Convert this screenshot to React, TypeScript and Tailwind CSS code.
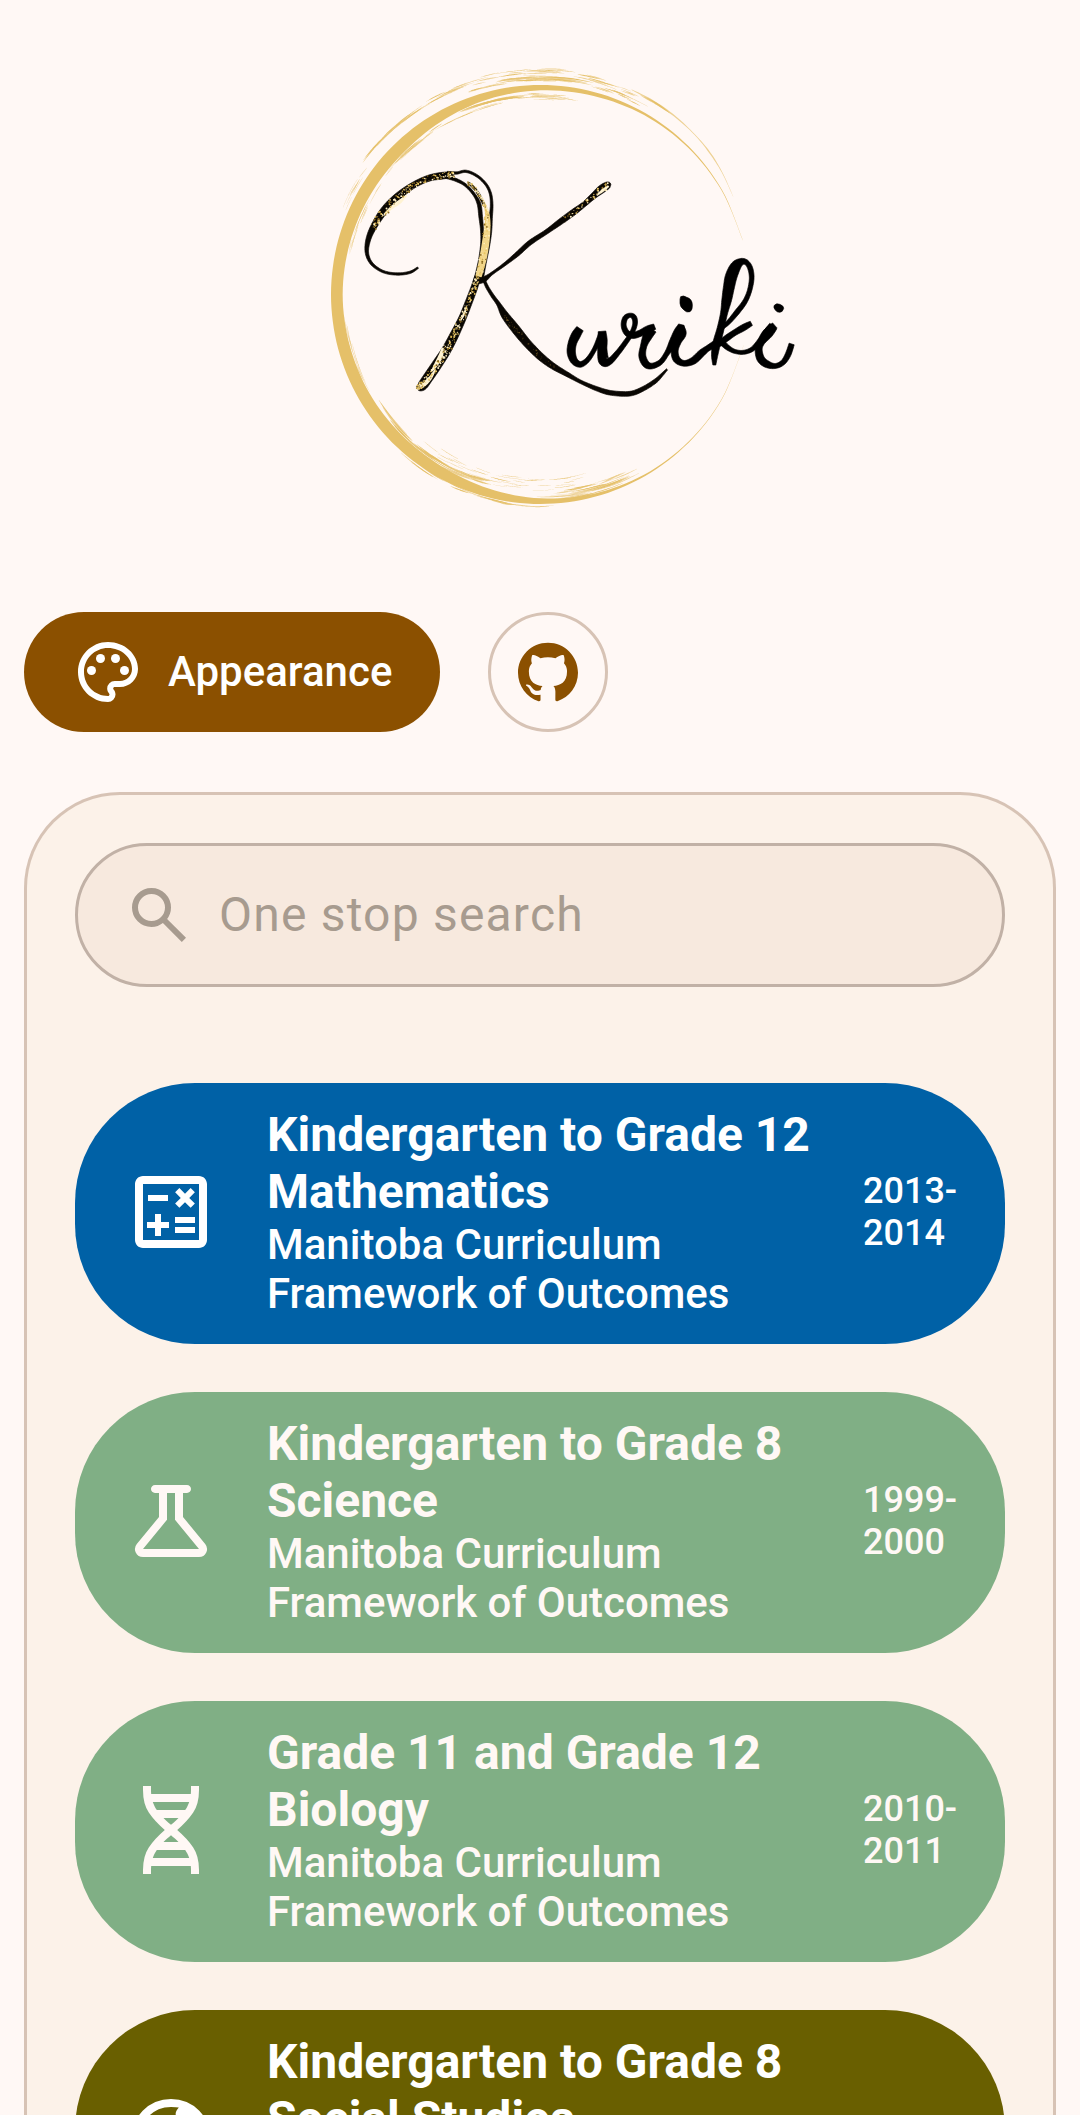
import { MdOutlineCalculate, MdOutlinePalette } from "react-icons/md";

type BrushPoint = [x: number, y: number, width: number];

/** Closed outline of a smooth stroke whose width varies from point to point. */
function brush(points: BrushPoint[], dx = 0, dy = 0, swell = 0): string {
  const samples: BrushPoint[] = [];
  const at = (i: number) => points[Math.max(0, Math.min(points.length - 1, i))];
  const steps = 8;
  for (let i = 0; i < points.length - 1; i++) {
    for (let s = 0; s < steps; s++) {
      const t = s / steps;
      samples.push(
        [0, 1, 2].map((k) => {
          const [a, b, c, d] = [at(i - 1)[k], at(i)[k], at(i + 1)[k], at(i + 2)[k]];
          return (
            0.5 *
            (2 * b + (c - a) * t + (2 * a - 5 * b + 4 * c - d) * t * t + (3 * b - a - 3 * c + d) * t * t * t)
          );
        }) as BrushPoint,
      );
    }
  }
  samples.push(points[points.length - 1]);
  const left: string[] = [];
  const right: string[] = [];
  samples.forEach(([x, y, w], i) => {
    const p = samples[Math.max(0, i - 1)];
    const n = samples[Math.min(samples.length - 1, i + 1)];
    const len = Math.hypot(n[0] - p[0], n[1] - p[1]) || 1;
    const half = (w + swell) / 2;
    const nx = (-(n[1] - p[1]) / len) * half;
    const ny = ((n[0] - p[0]) / len) * half;
    left.push(`${(x + nx + dx).toFixed(1)} ${(y + ny + dy).toFixed(1)}`);
    right.unshift(`${(x - nx + dx).toFixed(1)} ${(y - ny + dy).toFixed(1)}`);
  });
  return `M${left.join("L")}L${right.join("L")}Z`;
}

function seeded(seed: number) {
  let s = seed;
  return () => {
    s = (s * 16807) % 2147483647;
    return s / 2147483647;
  };
}

const CX = 691.5;
const CY = 733.5;
const R = 628.5;

const polar = (deg: number, r: number): [number, number] => [
  CX + r * Math.cos((deg * Math.PI) / 180),
  CY + r * Math.sin((deg * Math.PI) / 180),
];

/** Angle in degrees and thickness of the ring, clockwise from the right. */
const ringProfile: [number, number][] = [
  [14, 0.3], [30, 1], [45, 2.4], [60, 5], [75, 10], [90, 17], [105, 26], [120, 34], [135, 36], [150, 36],
  [165, 36], [180, 35], [195, 36], [210, 37], [225, 37], [240, 30], [255, 22], [270, 16], [285, 12],
  [300, 7], [315, 4], [330, 2], [345, 0.4],
];

const ring = brush(
  ringProfile.map(([deg, w]) => {
    const [x, y] = polar(deg, R - w / 2);
    return [x, y, w] as BrushPoint;
  }),
);

/** Dry bristle marks: [from, to, inner offset, outer offset, count, arc length, thickness]. */
const bristles: [number, number, number, number, number, number, number][] = [
  [216, 242, 32, 41, 16, 9, 2],
  [202, 222, 8, 22, 10, 6, 1],
  [238, 256, 34, 46, 14, 8, 2],
  [250, 292, 12, 48, 40, 8, 2],
  [258, 286, 18, 26, 10, 14, 3],
  [296, 306, 40, 44, 5, 6, 3],
  [284, 302, 12, 38, 16, 6, 2],
  [218, 262, -46, -38, 16, 10, 2],
  [244, 276, -34, -28, 12, 12, 4],
  [262, 284, -42, -24, 14, 7, 2],
  [190, 225, -50, -40, 14, 7, 1],
  [104, 152, -50, -36, 26, 12, 3],
  [75, 130, -78, -40, 44, 6, 1],
  [58, 92, -28, -10, 20, 14, 2],
  [60, 90, -44, -24, 16, 9, 2],
  [86, 132, 0, 8, 18, 10, 2],
  [150, 175, -42, -38, 10, 9, 1],
];

const rand = seeded(4127);
const bristlePaths = bristles.flatMap(([from, to, lo, hi, count, arc, w]) =>
  Array.from({ length: count }, () => {
    const a = from + rand() * Math.max(1, to - from - arc);
    const span = arc * (0.4 + rand() * 0.7);
    const off = lo + rand() * (hi - lo);
    const slope = (rand() - 0.5) * 6;
    const width = w * (0.6 + rand() * 0.9);
    return brush(
      [0, 0.33, 0.66, 1].map((t) => {
        const [x, y] = polar(a + span * t, R + off + slope * t);
        return [x, y, t === 0 || t === 1 ? 0.4 : width] as BrushPoint;
      }),
    );
  }),
);

/** Long bristle trail that leaves the ring at its upper right. */
const trail = brush(
  [[294, 44, 2], [300, 43, 5], [307, 41, 4], [314, 38, 2], [320, 34, 4], [326, 28, 2], [333, 20, 0.5]].map(
    ([deg, off, w]) => {
      const [x, y] = polar(deg, R + off);
      return [x, y, w] as BrushPoint;
    },
  ),
);

const swash: BrushPoint[] = [
  [324, 653, 5], [300, 667, 7], [262, 672, 7], [220, 665, 7], [186, 642, 8], [171, 610, 10], [174, 572, 14],
  [190, 532, 18], [222, 482, 22], [262, 441, 22], [308, 407, 18], [355, 385, 18], [398, 377, 20], [430, 374, 16],
];
const outerBow: BrushPoint[] = [
  [412, 368, 8], [440, 369, 7], [468, 364, 7], [500, 377, 7], [527, 402, 7], [541, 430, 7], [545, 465, 8],
  [542, 505, 10], [539, 545, 12], [532, 590, 13], [524, 640, 9], [516, 690, 7],
];
const innerBow: BrushPoint[] = [
  [400, 378, 10], [436, 389, 9], [466, 405, 8], [492, 433, 8], [507, 462, 11], [512, 500, 11], [516, 540, 9],
  [517, 580, 10], [511, 630, 11], [500, 680, 12], [493, 700, 10],
];
const goldCore: BrushPoint[] = [
  [474, 398, 8], [492, 412, 8], [510, 440, 8], [526, 470, 9], [533, 510, 16], [528, 570, 22], [518, 630, 22],
  [503, 690, 18],
];
const stem: BrushPoint[] = [
  [503, 680, 18], [492, 715, 20], [475, 760, 21], [457, 805, 22], [433, 855, 26], [408, 902, 28], [380, 945, 30],
  [354, 983, 30], [336, 1008, 28], [323, 1015, 14],
];
const arm: BrushPoint[] = [
  [498, 695, 16], [522, 688, 16], [545, 671, 8], [585, 642, 9], [622, 612, 13], [660, 578, 14], [710, 545, 13],
  [750, 516, 17], [790, 487, 18], [822, 463, 15], [850, 438, 18], [874, 418, 24], [894, 405, 20], [902, 402, 6],
];
const leg: BrushPoint[] = [
  [521, 688, 8], [532, 712, 9], [548, 738, 10], [566, 763, 12], [585, 796, 22], [616, 836, 26], [652, 880, 24],
  [692, 920, 22], [730, 949, 18], [775, 975, 13], [815, 997, 10], [865, 1018, 13], [905, 1029, 14],
  [960, 1031, 14], [1000, 1016, 13], [1035, 994, 12], [1056, 974, 8], [1071, 958, 5],
];

/** The small strokes share an origin at (750, 690). */
const small: BrushPoint[][] = [
  [[60, 146, 20], [48, 165, 24], [37, 190, 22], [34, 218, 22], [43, 243, 18], [62, 253, 14], [84, 238, 11], [105, 205, 10], [126, 160, 16]],
  [[126, 154, 20], [128, 180, 24], [127, 210, 25], [132, 243, 28], [150, 243, 16], [175, 216, 12], [196, 188, 11], [215, 160, 10], [225, 132, 11], [222, 112, 12], [210, 106, 10], [196, 114, 12], [191, 136, 12], [200, 158, 14], [218, 166, 16], [240, 160, 16], [264, 148, 18], [284, 140, 14]],
  [[276, 148, 26], [262, 170, 24], [251, 198, 16], [247, 228, 18], [258, 252, 18], [276, 258, 14], [302, 246, 12], [322, 218, 12], [342, 185, 24], [358, 155, 28], [364, 134, 14]],
  [[362, 140, 16], [364, 160, 26], [352, 185, 20], [344, 212, 18], [350, 238, 18], [372, 250, 14], [400, 242, 18], [424, 220, 18], [445, 204, 14], [472, 190, 20], [492, 184, 14]],
  [[463, 255, 6], [464, 225, 16], [470, 190, 20], [482, 145, 18], [492, 100, 18], [500, 60, 26], [507, 20, 30], [514, -12, 32], [528, -42, 28], [545, -55, 17], [560, -52, 12], [571, -34, 12], [575, -4, 11], [568, 34, 10], [554, 66, 11], [533, 94, 12], [508, 124, 10], [488, 142, 8]],
  [[574, 130, 11], [552, 142, 16], [524, 158, 14], [498, 176, 15], [480, 190, 12]],
  [[484, 185, 14], [502, 202, 12], [524, 214, 9], [550, 217, 9], [576, 208, 10], [598, 185, 12], [620, 158, 20], [644, 136, 16]],
  [[640, 138, 24], [624, 160, 26], [604, 186, 18], [596, 208, 18], [602, 236, 20], [620, 252, 18], [645, 258, 12], [668, 248, 12], [684, 224, 14], [695, 192, 13]],
];

/** Gold leaf specks scattered along a stroke. */
function specks(points: BrushPoint[], count: number, spread: number) {
  return Array.from({ length: count }, () => {
    const pos = rand() * (points.length - 1.001);
    const i = Math.floor(pos);
    const t = pos - i;
    const [ax, ay, aw] = points[i];
    const [bx, by, bw] = points[i + 1];
    const w = (aw + (bw - aw) * t) * spread;
    const tone = rand();
    return {
      x: ax + (bx - ax) * t + (rand() - 0.5) * w,
      y: ay + (by - ay) * t + (rand() - 0.5) * w,
      r: 1 + rand() * 2.2,
      fill: tone < 0.4 ? "#e8c460" : tone < 0.7 ? "#fff0c4" : "#8a6a20",
    };
  });
}

const goldSpecks = [
  ...specks(swash.slice(7), 190, 1),
  ...specks(goldCore, 150, 1.1),
  ...specks(stem, 260, 0.85),
  ...specks(arm.slice(7, 13), 60, 0.8),
];
const dimSpecks = specks(leg.slice(4, 9), 50, 0.6);

function Logo() {
  return (
    <svg role="img" aria-label="Kuriki" viewBox="-120 -78 1620 1620" className="aspect-square w-full max-w-[540px]">
      <g fill="#e5c069">
        <path d={ring} />
        <path d={trail} opacity="0.7" />
        {bristlePaths.map((d, i) => (
          <path key={i} d={d} opacity={i % 3 === 0 ? 1 : 0.7} />
        ))}
      </g>
      <g fill="#0a0703" stroke="#0a0703" strokeWidth="2" strokeLinejoin="round">
        <path d={brush(swash)} />
        <path d={brush(outerBow)} />
        <path d={brush(innerBow)} />
        <path d={brush(goldCore)} fill="#f2d68a" stroke="none" />
        <path d={brush([[476, 399, 6], [492, 414, 7], [508, 436, 7], [522, 466, 5]])} />
        <path d={brush(stem)} />
        <path d={brush(arm)} />
        <path d={brush(leg)} />
      </g>
      <g fill="#fff3d2">
        <path d={brush([[222, 494, 5], [246, 472, 10], [268, 456, 12], [290, 436, 4]])} />
        <path d={brush([[398, 893, 6], [392, 918, 14], [378, 944, 12], [364, 965, 4]])} />
        <path d={brush([[376, 958, 4], [360, 985, 11], [338, 1006, 14], [324, 1012, 8]])} />
        <path d={brush([[896, 408, 6], [880, 420, 9], [860, 436, 5]])} />
        <path d={brush([[470, 770, 3], [462, 792, 7], [452, 812, 3]])} />
      </g>
      {goldSpecks.map((s, i) => (
        <circle key={i} cx={s.x} cy={s.y} r={s.r} fill={s.fill} />
      ))}
      {dimSpecks.map((s, i) => (
        <circle key={i} cx={s.x} cy={s.y} r={s.r * 0.7} fill="#6b5220" />
      ))}
      <g fill="#000" stroke="#000" strokeWidth="2" strokeLinejoin="round">
        {small.map((points, i) => (
          <path key={i} d={brush(points, 750, 690, 3)} />
        ))}
        <path d="M1112 740q8-5 18 2 16 4 17 22 1 16-7 21-10 4-18-5-12-9-12-20-1-14 2-20Z" />
        <path d="M1392 767q7-9 17-4 12 4 12 12-3 12-12 12-9 0-13-7-6-7-4-13Z" />
      </g>
    </svg>
  );
}

function SymbolIcon({ d, className }: { d: string; className: string }) {
  return (
    <svg viewBox="0 -960 960 960" fill="currentColor" aria-hidden="true" className={className}>
      <path d={d} />
    </svg>
  );
}

function GithubMark() {
  return (
    <svg viewBox="0 0 24 24" fill="currentColor" aria-hidden="true" className="size-[60px]">
      <path d="M12 .297c-6.63 0-12 5.373-12 12 0 5.303 3.438 9.8 8.205 11.385.6.113.82-.258.82-.577 0-.285-.01-1.04-.015-2.04-3.338.724-4.042-1.61-4.042-1.61C4.422 18.07 3.633 17.7 3.633 17.7c-1.087-.744.084-.729.084-.729 1.205.084 1.838 1.236 1.838 1.236 1.07 1.835 2.809 1.305 3.495.998.108-.776.417-1.305.76-1.605-2.665-.3-5.466-1.332-5.466-5.93 0-1.31.465-2.38 1.235-3.22-.135-.303-.54-1.523.105-3.176 0 0 1.005-.322 3.3 1.23.96-.267 1.98-.399 3-.405 1.02.006 2.04.138 3 .405 2.28-1.552 3.285-1.23 3.285-1.23.645 1.653.24 2.873.12 3.176.765.84 1.23 1.91 1.23 3.22 0 4.61-2.805 5.625-5.475 5.92.42.36.81 1.096.81 2.22 0 1.606-.015 2.896-.015 3.286 0 .315.21.69.825.57C20.565 22.092 24 17.592 24 12.297c0-6.627-5.373-12-12-12" />
    </svg>
  );
}

const SEARCH =
  "M784-120 532-372q-30 24-69 38t-83 14q-109 0-184.5-75.5T120-580q0-109 75.5-184.5T380-840q109 0 184.5 75.5T640-580q0 44-14 83t-38 69l252 252-56 56ZM380-400q75 0 127.5-52.5T560-580q0-75-52.5-127.5T380-760q-75 0-127.5 52.5T200-580q0 75 52.5 127.5T380-400Z";
const FLASK =
  "M200-120q-51 0-72.5-45.5T138-250l222-270v-240h-40q-17 0-28.5-11.5T280-800q0-17 11.5-28.5T320-840h320q17 0 28.5 11.5T680-800q0 17-11.5 28.5T640-760h-40v240l222 270q32 39 10.5 84.5T760-120H200Zm0-80h560L520-492v-268h-80v268L200-200Z";
const GENETICS =
  "M200-40v-40q0-139 58-225.5T418-480q-102-88-160-174.5T200-880v-40h80v40q0 11 .5 20.5T282-840h396q1-10 1.5-19.5t.5-20.5v-40h80v40q0 139-58 225.5T542-480q102 88 160 174.5T760-80v40h-80v-40q0-11-.5-20.5T678-120H282q-1 10-1.5 19.5T280-80v40h-80Zm138-640h284q13-19 22.5-38t17.5-42H298q8 22 17.5 41.5T338-680Zm142 148q20-17 39-34t36-34H405q17 17 36 34t39 34Zm-75 172h150q-17-17-36-34t-39-34q-20 17-39 34t-36 34ZM298-200h364q-8-22-17.5-41.5T622-280H338q-13 19-22.5 38T298-200Z";
const GLOBE =
  "M480-80q-166 0-283-117T80-480q0-166 117-283t283-117q166 0 283 117t117 283q0 166-117 283T480-80Zm0-80q133 0 226.5-93.5T800-480l-80 40-80-60-100 10-20-90 50-70-40-60q-16-34 28-84-22-6-78-6-133 0-226.5 93.5T160-480l120 60 60 110 100 30v119q20 1 40 1Z";

interface Course {
  title: string;
  years: string;
  tone: string;
  icon: React.ReactNode;
}

const courses: Course[] = [
  {
    title: "Kindergarten to Grade 12 Mathematics",
    years: "2013-2014",
    tone: "bg-[#0061a6] text-white",
    icon: <MdOutlineCalculate aria-hidden="true" className="size-24 shrink-0" />,
  },
  {
    title: "Kindergarten to Grade 8 Science",
    years: "1999-2000",
    tone: "bg-[#80af85] text-[#fff8f5]",
    icon: <SymbolIcon d={FLASK} className="size-24 shrink-0" />,
  },
  {
    title: "Grade 11 and Grade 12 Biology",
    years: "2010-2011",
    tone: "bg-[#80af85] text-[#fff8f5]",
    icon: <SymbolIcon d={GENETICS} className="size-24 shrink-0" />,
  },
  {
    title: "Kindergarten to Grade 8 Social Studies",
    years: "2003",
    tone: "bg-[#695f00] text-white",
    icon: <SymbolIcon d={GLOBE} className="size-24 shrink-0" />,
  },
];

function CourseCard({ title, years, tone, icon }: Course) {
  return (
    <button
      type="button"
      className={`flex min-h-[261px] w-full items-center gap-12 rounded-[120px] px-12 pt-5 pb-6 text-left font-medium ${tone}`}
    >
      {icon}
      <span className="min-w-0 flex-1">
        <span className="block text-[48px] leading-[57px] font-bold">{title}</span>
        <span className="block text-[42px] leading-[49px]">Manitoba Curriculum Framework of Outcomes</span>
      </span>
      <span className="w-[94px] shrink-0 text-[36px] leading-[42px]">{years}</span>
    </button>
  );
}

export default function App() {
  return (
    <div className="h-screen overflow-y-auto bg-[#fff8f5] px-6 pt-6 font-[Roboto,sans-serif] [scrollbar-width:none]">
      <header>
        <h1 className="flex justify-center">
          <Logo />
        </h1>
        <div className="mt-12 flex gap-12">
          <button
            type="button"
            className="flex h-[120px] items-center gap-6 rounded-full bg-[#8b5000] px-12 text-[42px] leading-[60px] font-medium text-white"
          >
            <MdOutlinePalette aria-hidden="true" className="size-[72px]" />
            Appearance
          </button>
          <a
            href="#github"
            aria-label="GitHub"
            className="flex size-[120px] items-center justify-center rounded-full border-3 border-[#d7c3b5] text-[#8b5000]"
          >
            <GithubMark />
          </a>
        </div>
      </header>
      <main className="mt-[60px] rounded-t-[96px] border-3 border-b-0 border-[#d7c3b5] bg-[#fcf2e9] p-12">
        <label className="flex h-36 items-center gap-6 rounded-full border-3 border-[#c1b1a6] bg-[#f7e9de] px-[45px] text-[#a79b8f]">
          <SymbolIcon d={SEARCH} className="size-[72px] shrink-0" />
          <input
            type="search"
            aria-label="One stop search"
            placeholder="One stop search"
            className="min-w-0 flex-1 bg-transparent text-[48px] leading-[72px] tracking-wide outline-none placeholder:text-[#a79b8f]"
          />
        </label>
        <ul className="mt-24 flex flex-col gap-12">
          {courses.map((course) => (
            <li key={course.title}>
              <CourseCard {...course} />
            </li>
          ))}
        </ul>
      </main>
    </div>
  );
}
